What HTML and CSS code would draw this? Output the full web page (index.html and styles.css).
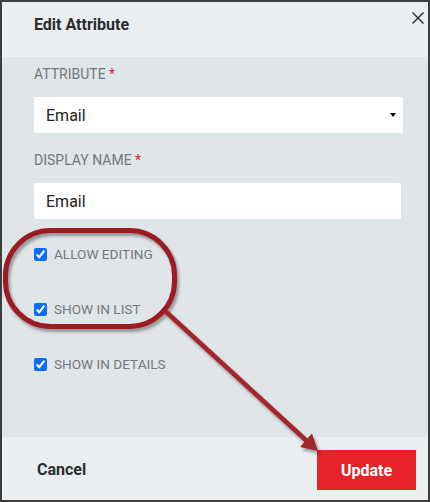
FILE: index.html
```html
<!DOCTYPE html>
<html lang="en">
  <head>
    <meta charset="UTF-8" />
    <meta name="viewport" content="width=device-width" />
    <title>Edit Attribute</title>
    <link rel="stylesheet" href="styles.css">
  </head>
  <body>
    <div class="dialog">
      <header class="dialog-header">
        <h2 class="dialog-title">Edit Attribute</h2>
        <button class="close" aria-label="Close">
          <svg width="12" height="12" viewBox="0 0 12 12"><path d="M0.5 0.5L11.5 11.5M11.5 0.5L0.5 11.5" stroke="#333" stroke-width="1.5" fill="none"/></svg>
        </button>
      </header>

      <div class="dialog-body">
        <label class="field-label">Attribute <span class="req">*</span></label>
        <div class="select">
          <span>Email</span>
          <span class="caret"></span>
        </div>

        <label class="field-label second">Display Name <span class="req">*</span></label>
        <input class="text-input" type="text" value="Email" />

        <div class="checks">
          <label class="check"><input type="checkbox" checked /> Allow Editing</label>
          <label class="check"><input type="checkbox" checked /> Show in List</label>
          <label class="check"><input type="checkbox" checked /> Show in Details</label>
        </div>
      </div>

      <footer class="dialog-footer">
        <button class="btn-cancel">Cancel</button>
        <button class="btn-update">Update</button>
      </footer>

      <!-- callout drawn over the dialog -->
      <svg class="callout" width="430" height="502" viewBox="0 0 430 502">
        <defs>
          <filter id="shadow" x="-10%" y="-10%" width="130%" height="130%">
            <feDropShadow dx="2" dy="3" stdDeviation="1.6" flood-color="#000" flood-opacity="0.35"/>
          </filter>
        </defs>
        <g filter="url(#shadow)">
          <line x1="163" y1="309" x2="309" y2="443" stroke="#a3262a" stroke-width="4.5"/>
          <polygon points="318,451 300,447 312,433.5" fill="#a3262a"/>
          <rect x="5.5" y="230.5" width="169" height="96" rx="45" ry="45" fill="none" stroke="#9b1c20" stroke-width="5"/>
        </g>
      </svg>
    </div>
  </body>
</html>
```

FILE: styles.css
```css
html,
body {
  margin: 0;
  padding: 0;
}
body {
  font-family: Roboto, "Liberation Sans", sans-serif;
  background: #3d3d3d;
}
.dialog {
  position: relative;
  box-sizing: border-box;
  width: 430px;
  height: 502px;
  border: 2px solid #3d3d3d;
  display: flex;
  flex-direction: column;
  background: #e0e5e8;
}
.dialog-header {
  height: 55px;
  background: #eaeef1;
  display: flex;
  align-items: flex-start;
  justify-content: space-between;
  padding: 0 4px 0 32px;
}
.dialog-title {
  margin: 14px 0 0;
  font-size: 16px;
  font-weight: 700;
  color: #2b2b2b;
  line-height: 18px;
}
.close {
  border: 0;
  background: none;
  padding: 0;
  margin-top: 10px;
  width: 12px;
  height: 12px;
  display: flex;
}
.dialog-body {
  flex: 1;
  padding: 9px 25px 0 32px;
  display: flex;
  flex-direction: column;
}
.field-label {
  font-size: 14px;
  line-height: 16px;
  text-transform: uppercase;
  color: #72787e;
}
.field-label.second {
  margin-top: 19px;
}
.req {
  color: #e0262b;
}
.select,
.text-input {
  box-sizing: border-box;
  height: 36px;
  margin-top: 15px;
  background: #fff;
  border: 0;
  border-radius: 2px;
  font-family: inherit;
  font-size: 16px;
  color: #222;
  padding: 0 12px;
}
.select {
  display: flex;
  align-items: center;
  justify-content: space-between;
  padding-right: 7px;
}
.caret {
  width: 0;
  height: 0;
  border-left: 3.5px solid transparent;
  border-right: 3.5px solid transparent;
  border-top: 4px solid #000;
}
.text-input {
  margin-right: 2px;
  outline: none;
}
.checks {
  margin-top: 25px;
  display: flex;
  flex-direction: column;
  gap: 35px;
}
.check {
  height: 20px;
  display: flex;
  align-items: center;
  font-size: 13.6px;
  text-transform: uppercase;
  color: #72787e;
}
.check input {
  width: 13px;
  height: 13px;
  margin: 0 7px 0 0;
  accent-color: #0b6cf5;
}
.dialog-footer {
  height: 63px;
  background: #eaeef1;
  display: flex;
  align-items: center;
  justify-content: space-between;
  padding: 0 12px 0 33px;
  box-sizing: border-box;
}
.btn-cancel {
  border: 0;
  background: none;
  padding: 0 2px;
  margin-top: 2px;
  font-family: inherit;
  font-size: 16px;
  font-weight: 700;
  color: #2d2d2d;
}
.btn-update {
  border: 0;
  width: 99px;
  height: 40px;
  margin-top: 3px;
  background: #e52329;
  color: #fff;
  font-family: inherit;
  font-size: 16px;
  font-weight: 700;
}
.callout {
  position: absolute;
  left: -2px;
  top: -2px;
  pointer-events: none;
}
```
